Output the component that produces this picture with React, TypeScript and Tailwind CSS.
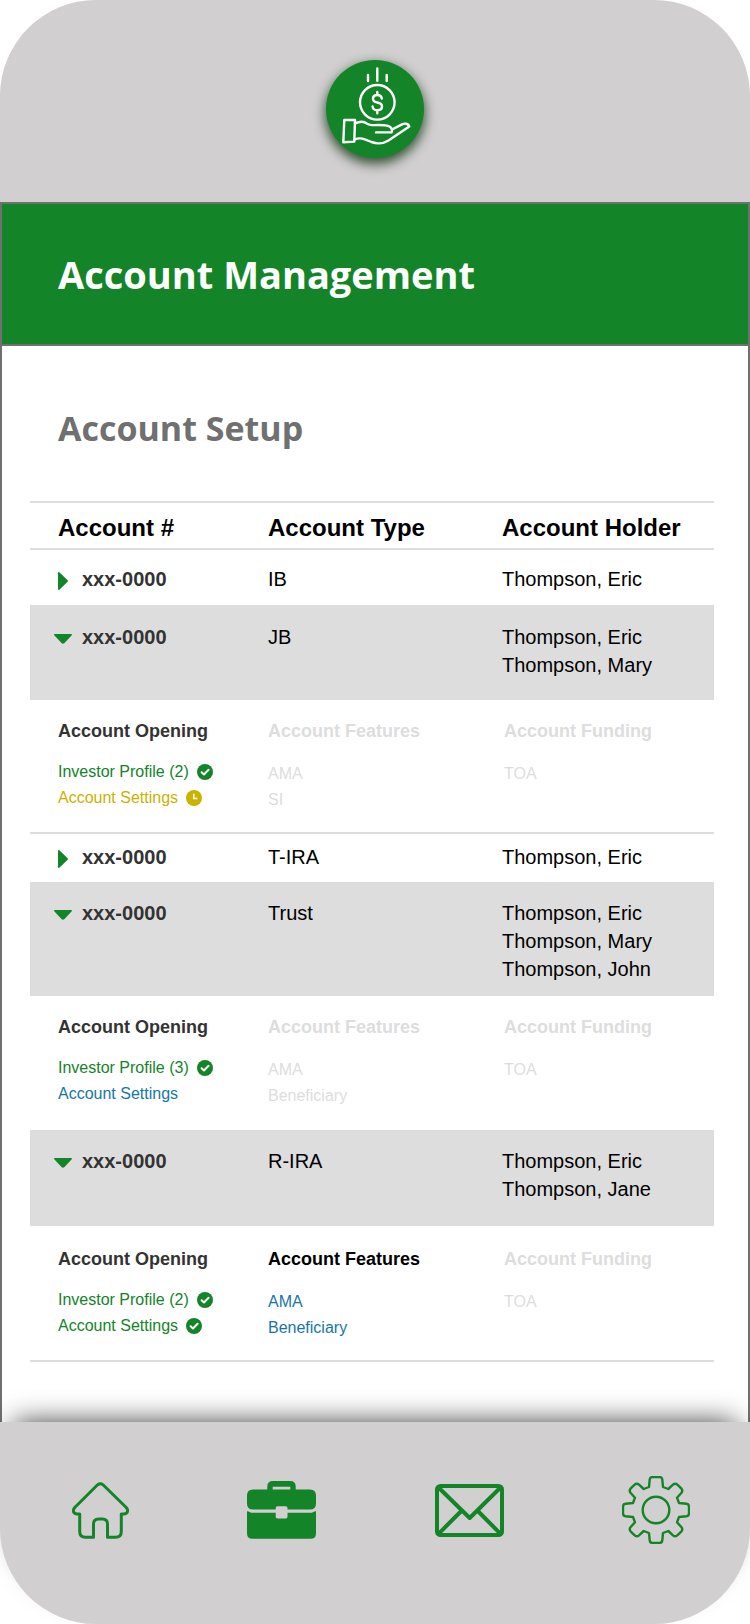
import { useState } from "react";
import { clsx } from "clsx";

type Status = "done" | "pending" | "open" | "disabled";

interface Item {
  label: string;
  status: Status;
  icon?: boolean;
}

interface Account {
  id: string;
  type: string;
  holders: string[];
  open: boolean;
  rowClass: string;
  detailClass?: string;
  opening?: Item[];
  features?: Item[];
  funding?: Item[];
  featuresActive?: boolean;
}

const accounts: Account[] = [
  {
    id: "ib",
    type: "IB",
    holders: ["Thompson, Eric"],
    open: false,
    rowClass: "pt-[15px] pb-3",
  },
  {
    id: "jb",
    type: "JB",
    holders: ["Thompson, Eric", "Thompson, Mary"],
    open: true,
    rowClass: "pt-[18px] pb-[21px]",
    detailClass: "h-[134px] pt-[19px] border-b-2 border-[#dddddd]",
    opening: [
      { label: "Investor Profile (2)", status: "done", icon: true },
      { label: "Account Settings", status: "pending", icon: true },
    ],
    features: [
      { label: "AMA", status: "disabled" },
      { label: "SI", status: "disabled" },
    ],
    funding: [{ label: "TOA", status: "disabled" }],
  },
  {
    id: "t-ira",
    type: "T-IRA",
    holders: ["Thompson, Eric"],
    open: false,
    rowClass: "pt-[9px] pb-[11px]",
  },
  {
    id: "trust",
    type: "Trust",
    holders: ["Thompson, Eric", "Thompson, Mary", "Thompson, John"],
    open: true,
    rowClass: "pt-[17px] pb-[13px]",
    detailClass: "h-[134px] pt-[19px]",
    opening: [
      { label: "Investor Profile (3)", status: "done", icon: true },
      { label: "Account Settings", status: "open" },
    ],
    features: [
      { label: "AMA", status: "disabled" },
      { label: "Beneficiary", status: "disabled" },
    ],
    funding: [{ label: "TOA", status: "disabled" }],
  },
  {
    id: "r-ira",
    type: "R-IRA",
    holders: ["Thompson, Eric", "Thompson, Jane"],
    open: true,
    rowClass: "pt-[17px] pb-[23px]",
    detailClass: "h-[136px] pt-[21px] border-b-2 border-[#dddddd]",
    opening: [
      { label: "Investor Profile (2)", status: "done", icon: true },
      { label: "Account Settings", status: "done", icon: true },
    ],
    features: [
      { label: "AMA", status: "open" },
      { label: "Beneficiary", status: "open" },
    ],
    funding: [{ label: "TOA", status: "disabled" }],
    featuresActive: true,
  },
];

const statusColor: Record<Status, string> = {
  done: "text-[#148429]",
  pending: "text-[#c9b200]",
  open: "text-[#1676a8]",
  disabled: "text-[#dddddd]",
};

function StatusIcon({ status }: { status: Status }) {
  return (
    <svg viewBox="0 0 16 16" className="size-4 shrink-0" aria-hidden="true">
      <circle cx="8" cy="8" r="8" fill="currentColor" />
      {status === "pending" ? (
        <path d="M7.8 3.8V8.4H11.4" fill="none" stroke="#fff" strokeWidth="1.5" />
      ) : (
        <path
          d="M4.6 8.3 7 10.5 11.6 5.8"
          fill="none"
          stroke="#fff"
          strokeWidth="2"
          strokeLinecap="round"
          strokeLinejoin="round"
        />
      )}
    </svg>
  );
}

function Caret({ open }: { open: boolean }) {
  return (
    <svg viewBox="0 0 18 22" className="h-[22px] w-[18px] shrink-0 text-[#148429]" aria-hidden="true">
      <path
        d={
          open
            ? "M.8 8H17.2Q18.6 8.3 17.5 9.6L10.5 17Q9 18.6 7.5 17L.5 9.6Q-.6 8.3 .8 8Z"
            : "M4 4.8Q4.3 3.4 5.6 4.5L13.4 12Q14.6 13 13.4 14L5.6 21.5Q4.3 22.6 4 21.2Z"
        }
        fill="currentColor"
      />
    </svg>
  );
}

function ItemList({ items, className }: { items: Item[]; className: string }) {
  return (
    <ul className={clsx("text-base leading-[26px]", className)}>
      {items.map((item) => (
        <li key={item.label} className={statusColor[item.status]}>
          {item.status === "disabled" ? (
            item.label
          ) : (
            <a href={"#" + item.label.split(" ")[0].toLowerCase()} className="flex items-center gap-2">
              {item.label}
              {item.icon && <StatusIcon status={item.status} />}
            </a>
          )}
        </li>
      ))}
    </ul>
  );
}

function AccountRows({ account }: { account: Account }) {
  const [open, setOpen] = useState(account.open);
  const detail = clsx("align-top", account.detailClass);
  const heading = "text-lg leading-6 font-bold";
  return (
    <>
      <tr className={clsx("text-xl leading-7 text-black", open && "bg-[#dddddd]")}>
        <td className={clsx("pl-6 align-top", account.rowClass)}>
          <button
            type="button"
            aria-expanded={open}
            onClick={() => setOpen(!open)}
            className="flex items-center gap-2.5 font-bold text-[#333333]"
          >
            <Caret open={open} />
            xxx-0000
          </button>
        </td>
        <td className={clsx("align-top", account.rowClass)}>{account.type}</td>
        <td className={clsx("align-top", account.rowClass)}>
          {account.holders.map((holder) => (
            <div key={holder}>{holder}</div>
          ))}
        </td>
      </tr>
      {open && account.opening && (
        <tr>
          <td className={clsx(detail, "pl-7")}>
            <h3 className={clsx(heading, "text-[#333333]")}>Account Opening</h3>
            <ItemList items={account.opening} className="mt-4" />
          </td>
          <td className={detail}>
            <h3 className={clsx(heading, account.featuresActive ? "text-black" : "text-[#dddddd]")}>
              Account Features
            </h3>
            <ItemList items={account.features ?? []} className="mt-[18px]" />
          </td>
          <td className={clsx(detail, "pl-0.5")}>
            <h3 className={clsx(heading, "text-[#dddddd]")}>Account Funding</h3>
            <ItemList items={account.funding ?? []} className="mt-[18px]" />
          </td>
        </tr>
      )}
    </>
  );
}

function Logo() {
  return (
    <svg
      viewBox="0 0 98 98"
      className="size-[98px] rounded-full bg-[#148429] shadow-[0_5px_12px_1px_rgba(0,40,0,0.75)]"
      fill="none"
      stroke="#fff"
      strokeWidth="2.4"
      strokeLinecap="round"
      strokeLinejoin="round"
      role="img"
      aria-label="Home"
    >
      <path d="M42 15v6M51.3 8.5v12.3M60.7 15v6" />
      <circle cx="51.3" cy="42.3" r="17.3" />
      <path d="M51.3 32v3M51.3 50.2v3M55.8 38.6C55.6 36.3 54 35 51.3 35S47 36.5 47 38.7 48.4 42 51.3 42.5 56 44.2 56 46.5 54.2 50.2 51.3 50.2 46.8 48.8 46.6 46.5" />
      <path d="M18.3 60H29L28.3 81.6 17.3 82.3Z" />
      <path d="M29 63.4C33 61.6 38 61.2 41 63.6 43 65.2 45 65.2 49 65.1 57 64.8 60.5 65 63.5 66.5 65.8 68 66.5 70.3 65.5 72.4H50" />
      <path d="M66 69.5 76 64.4C79 63 82.5 63.4 83.3 66.6L62.5 80.5C57 84 51 84 45.5 82L39.5 79.6C35 77.7 32 78 28.6 79.3" />
    </svg>
  );
}

function HomeIcon() {
  return (
    <svg
      viewBox="0 0 57 57"
      className="size-[57px]"
      fill="none"
      stroke="currentColor"
      strokeWidth="3"
      strokeLinejoin="round"
      aria-hidden="true"
    >
      <path d="M25.6 2.8Q28.3 .6 31 2.8L54 25.3C57 28.5 55.5 32 52 32H49.3V49.5Q49.3 55.3 43.5 55.3H35.5V42Q35.5 37 30.5 37H26.5Q21.5 37 21.5 42V55.3H13.5Q7.7 55.3 7.7 49.5V32H5C1.5 32 0 28.5 3 25.3Z" />
    </svg>
  );
}

function BriefcaseIcon() {
  return (
    <svg viewBox="0 0 69 58" className="h-[58px] w-[69px]" fill="currentColor" aria-hidden="true">
      <path
        fillRule="evenodd"
        d="M20.3 8.4V5.5Q20.3 0 25.8 0H43.2Q48.700 0 48.7 5.5V8.4H63Q69 8.4 69 14.4V22.5Q69 28.5 63 28.5H40.5V27Q40.5 25.3 38.8 25.3H30.4Q28.7 25.3 28.7 27V28.5H6Q0 28.5 0 22.5V14.4Q0 8.4 6 8.4ZM25.7 5.7V8.6H43.3V5.7Z"
      />
      <path d="M0 30.2Q2 30 4 31.7H28.7V35.8Q28.7 37.5 30.4 37.5H38.8Q40.5 37.5 40.5 35.8V31.7H65Q67 30 69 30.2V52.3Q69 57.8 63.5 57.8H5.5Q0 57.8 0 52.3Z" />
    </svg>
  );
}

function MailIcon() {
  return (
    <svg
      viewBox="0 0 69 53"
      className="h-[53px] w-[69px]"
      fill="none"
      stroke="currentColor"
      strokeWidth="4"
      aria-hidden="true"
    >
      <rect x="2" y="2" width="65" height="49" rx="3.5" />
      <path
        d="M3.5 3.5 34.7 34 65.5 3.5M3.5 49.8 25.8 27.5M65.5 49.8 43.3 27.5"
        strokeLinejoin="round"
      />
    </svg>
  );
}

const gearQuarter =
  "M0-33H3.5Q6-33 6.3-30.5L7-23 12.3-21 17-25.3Q19.3-27.3 21.6-25.2L25.2-21.6Q27.3-19.3 25.3-17L21-12.3 23-7 30.5-6.3Q33-6 33-3.5V0";

function GearIcon() {
  return (
    <svg
      viewBox="-34 -34 68 68"
      className="size-[68px]"
      fill="none"
      stroke="currentColor"
      strokeWidth="2.4"
      strokeLinejoin="round"
      aria-hidden="true"
    >
      <circle r="13.3" />
      <path d={gearQuarter} />
      <path d={gearQuarter} transform="rotate(90)" />
      <path d={gearQuarter} transform="rotate(180)" />
      <path d={gearQuarter} transform="rotate(270)" />
    </svg>
  );
}

export default function App() {
  return (
    <div className="flex min-h-screen flex-col bg-white font-['Liberation_Sans',Arial,sans-serif]">
      <header className="flex justify-center rounded-t-[96px] bg-[#d1cfd0] pt-[60px] pb-11">
        <Logo />
      </header>

      <main className="grow border-x-2 border-[#707070]">
        <div className="border-y-2 border-[#707070] bg-[#148429] px-14 py-11">
          <h1 className="font-['Open_Sans','Noto_Sans',sans-serif] text-[38px] leading-[52px] font-bold text-white">
            Account Management
          </h1>
        </div>

        <section className="pt-[60px] pr-[34px] pb-[60px] pl-7">
          <h2 className="pl-7 font-['Open_Sans','Noto_Sans',sans-serif] text-[34px] leading-[44px] font-bold text-[#707070]">
            Account Setup
          </h2>
          <table className="mt-[51px] w-full table-fixed border-separate border-spacing-0 text-left">
            <colgroup>
              <col className="w-[238px]" />
              <col className="w-[234px]" />
              <col />
            </colgroup>
            <thead>
              <tr className="text-2xl leading-7 text-black">
                <th scope="col" className="border-y-2 border-[#dddddd] pt-[11px] pb-1.5 pl-7 font-bold">
                  Account #
                </th>
                <th scope="col" className="border-y-2 border-[#dddddd] pt-[11px] pb-1.5 font-bold">
                  Account Type
                </th>
                <th scope="col" className="border-y-2 border-[#dddddd] pt-[11px] pb-1.5 font-bold">
                  Account Holder
                </th>
              </tr>
            </thead>
            <tbody>
              {accounts.map((account) => (
                <AccountRows key={account.id} account={account} />
              ))}
            </tbody>
          </table>
        </section>
      </main>

      <footer className="rounded-b-[96px] bg-[#d1cfd0] shadow-[0_-14px_28px_-14px_rgba(0,0,0,0.75)]">
        <nav
          aria-label="Main"
          className="flex items-center justify-between pt-[54px] pr-[60px] pb-20 pl-[72px] text-[#148429]"
        >
          <a href="#home" aria-label="Home">
            <HomeIcon />
          </a>
          <a href="#accounts" aria-label="Accounts" aria-current="page">
            <BriefcaseIcon />
          </a>
          <a href="#messages" aria-label="Messages">
            <MailIcon />
          </a>
          <a href="#settings" aria-label="Settings">
            <GearIcon />
          </a>
        </nav>
      </footer>
    </div>
  );
}
